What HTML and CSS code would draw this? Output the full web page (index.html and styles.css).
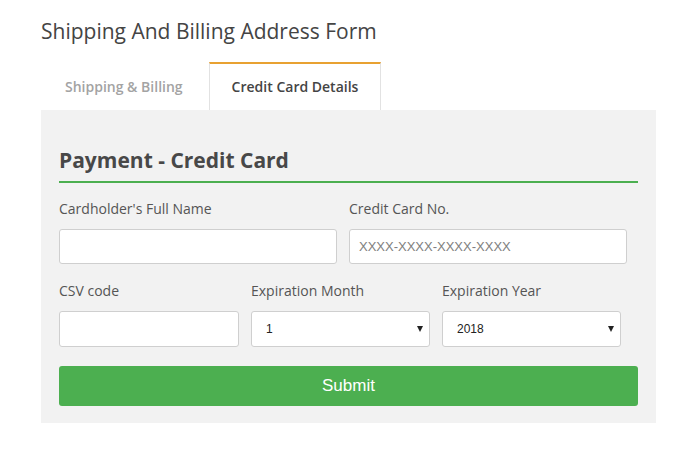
FILE: index.html
```html
<!DOCTYPE html>
<html>
<head>
<meta charset="utf-8">
<link rel="stylesheet" href="styles.css">
</head>
<body>
<div class="page">
  <h1 class="title">Shipping And Billing Address Form</h1>
  <div class="tabs">
    <div class="tab">Shipping &amp; Billing</div>
    <div class="tab active">Credit Card Details</div>
  </div>
  <div class="panel">
    <h2 class="heading">Payment - Credit Card</h2>
    <div class="row row-two">
      <div class="field">
        <label class="label">Cardholder's Full Name</label>
        <input class="input" type="text">
      </div>
      <div class="field">
        <label class="label">Credit Card No.</label>
        <input class="input" type="text" placeholder="XXXX-XXXX-XXXX-XXXX">
      </div>
    </div>
    <div class="row row-three">
      <div class="field">
        <label class="label">CSV code</label>
        <input class="input" type="text">
      </div>
      <div class="field">
        <label class="label">Expiration Month</label>
        <div class="select-wrap">
          <select class="select"><option>1</option></select>
        </div>
      </div>
      <div class="field">
        <label class="label">Expiration Year</label>
        <div class="select-wrap">
          <select class="select"><option>2018</option></select>
        </div>
      </div>
    </div>
    <button class="submit" type="button">Submit</button>
  </div>
</div>
</body>
</html>
```

FILE: styles.css
```css
* { box-sizing: border-box; }
html, body { margin: 0; padding: 0; background: #fff; }
body { font-family: "Open Sans", "Liberation Sans", sans-serif; color: #444; }
.page { width: 615px; margin-left: 41px; padding-top: 17px; }
.title {
  margin: 0;
  font-size: 21px;
  line-height: 28px;
  font-weight: 400;
  color: #444;
}
.tabs { display: flex; margin-top: 17px; gap: 2px; }
.tab {
  padding: 13px 22px 14px;
  font-size: 14px;
  line-height: 19px;
  font-weight: 600;
  color: #a3a3a3;
  border: 1px solid transparent;
  border-top: 2px solid transparent;
  border-bottom: 0;
}
.tab:first-child { padding-left: 23px; padding-right: 23px; }
.tab.active {
  background: #fff;
  color: #444;
  border-color: #e2e2e2;
  border-top-color: #e8a131;
}
.panel {
  background: #f2f2f2;
  padding: 37px 18px 17px;
}
.heading {
  margin: 0;
  font-size: 21px;
  line-height: 27px;
  font-weight: 700;
  color: #484848;
  padding-bottom: 7px;
  border-bottom: 2px solid #4caf50;
}
.row { display: grid; }
.row-two { grid-template-columns: 278px 278px; column-gap: 12px; margin-top: 16px; }
.row-three { grid-template-columns: 180px 179px 179px; column-gap: 12px; margin-top: 17px; }
.field { display: flex; flex-direction: column; }
.label {
  font-size: 14px;
  line-height: 19px;
  color: #555;
  margin-bottom: 11px;
}
.input {
  height: 35px;
  border: 1px solid #cfcfcf;
  border-radius: 3px;
  background: #fff;
  padding: 0 9px;
  font-family: "Liberation Sans", Arial, sans-serif;
  font-size: 13px;
  color: #333;
}
.row-three .input { height: 36px; }
.input::placeholder { color: #808080; }
.select-wrap { position: relative; }
.select-wrap::after {
  content: "";
  position: absolute;
  right: 7px;
  top: 15px;
  border-left: 3px solid transparent;
  border-right: 3px solid transparent;
  border-top: 6px solid #222;
}
.select {
  -webkit-appearance: none;
  appearance: none;
  width: 100%;
  height: 36px;
  border: 1px solid #cfcfcf;
  border-radius: 3px;
  background: #fff;
  padding: 0 14px;
  font-family: "Liberation Sans", Arial, sans-serif;
  font-size: 12px;
  color: #222;
}
.submit {
  display: block;
  width: 100%;
  margin-top: 19px;
  height: 40px;
  border: 0;
  border-radius: 3px;
  background: #4caf50;
  color: #fff;
  font-family: "Liberation Sans", Arial, sans-serif;
  font-size: 17px;
}
```
